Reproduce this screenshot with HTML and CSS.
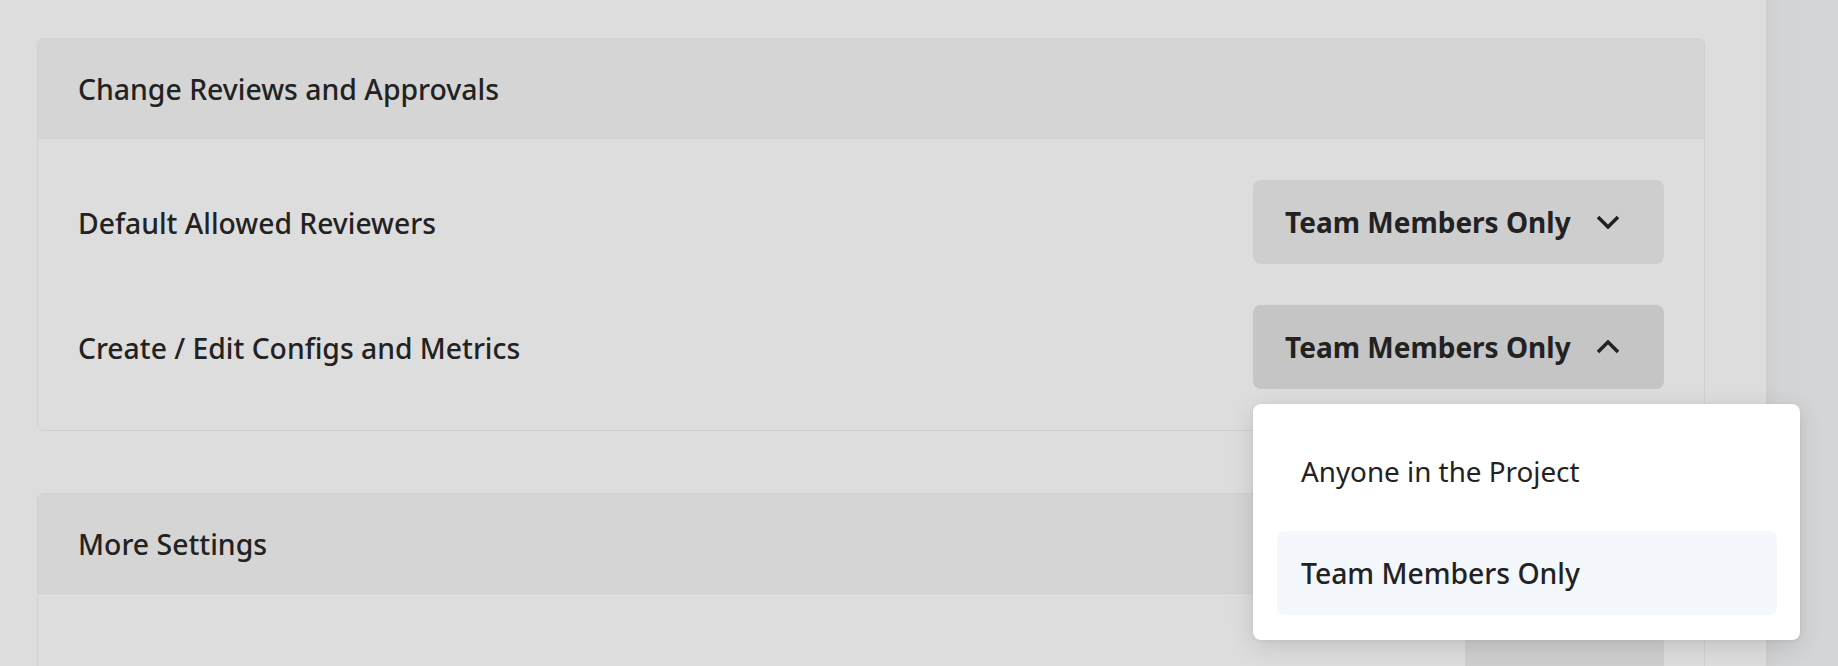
FILE: index.html
```html
<!DOCTYPE html>
<html lang="en">
<head>
<meta charset="utf-8">
<title>Settings</title>
<link rel="stylesheet" href="styles.css">
</head>
<body>
<div class="layout">
  <main class="main">
    <section class="card">
      <header class="card-header">Change Reviews and Approvals</header>
      <div class="card-body">
        <div class="row">
          <span class="row-label">Default Allowed Reviewers</span>
          <button class="select">
            <span>Team Members Only</span>
            <svg class="chev" width="24" height="14" viewBox="0 0 24 14"><polyline points="2,2 12,12 22,2"/></svg>
          </button>
        </div>
        <div class="row">
          <span class="row-label">Create / Edit Configs and Metrics</span>
          <div class="select-wrap">
            <button class="select open">
              <span>Team Members Only</span>
              <svg class="chev" width="24" height="14" viewBox="0 0 24 14"><polyline points="2,12 12,2 22,12"/></svg>
            </button>
            <ul class="menu">
              <li class="menu-item">Anyone in the Project</li>
              <li class="menu-item selected">Team Members Only</li>
            </ul>
          </div>
        </div>
      </div>
    </section>
    <section class="card">
      <header class="card-header">More Settings</header>
      <div class="card-body">
        <div class="row">
          <span class="row-label"></span>
          <button class="select small"></button>
        </div>
      </div>
    </section>
  </main>
  <aside class="side"></aside>
</div>
</body>
</html>
```
FILE: styles.css
```css
* { box-sizing: border-box; }
html, body {
  margin: 0;
  height: 666px;
  overflow: hidden;
  background: #dddddd;
  font-family: "Noto Sans", "Open Sans", sans-serif;
  color: #222222;
}
.layout {
  display: flex;
  height: 666px;
}
.main {
  width: 1766px;
  flex: none;
  padding: 38px 61px 0 37px;
  display: flex;
  flex-direction: column;
  gap: 62px;
}
.side {
  flex: 1;
  background: linear-gradient(to right, #cdcecf 0, #d3d4d6 14px, #d5d6d8 100%);
}
.card {
  border: 1px solid #d0d0d0;
  border-radius: 7px;
  background: #dddddd;
  flex: none;
}
.card-header {
  height: 100px;
  display: flex;
  align-items: center;
  padding-left: 40px;
  background: #d5d5d5;
  border-bottom: 1px solid #cfcfcf;
  border-radius: 7px 7px 0 0;
  font-size: 28.4px;
  font-weight: 500;
}
.card-body {
  padding: 41px 40px 41px 40px;
  display: flex;
  flex-direction: column;
  gap: 41px;
}
.row {
  display: flex;
  align-items: center;
  justify-content: space-between;
}
.row-label {
  font-size: 28.3px;
  font-weight: 500;
  padding-top: 2px;
}
.select-wrap {
  position: relative;
}
.select {
  width: 411px;
  height: 84px;
  border: none;
  border-radius: 8px;
  background: #cecece;
  display: flex;
  align-items: center;
  justify-content: space-between;
  padding: 0 44px 0 32px;
  font-family: inherit;
  font-size: 28px;
  font-weight: 700;
  color: #222222;
}
.select.open { background: #c5c5c5; }
.select.small {
  width: 199px;
  margin-left: auto;
}
.chev {
  fill: none;
  stroke: #222222;
  stroke-width: 3.5;
}
.menu {
  position: absolute;
  left: 0;
  top: 99px;
  width: 547px;
  margin: 0;
  padding: 25px 23px 25px 24px;
  list-style: none;
  background: #ffffff;
  border-radius: 8px;
  box-shadow: 0 6px 24px rgba(0, 0, 0, 0.12), 0 1px 4px rgba(0, 0, 0, 0.06);
  display: flex;
  flex-direction: column;
  gap: 18px;
  z-index: 5;
}
.menu-item {
  height: 84px;
  display: flex;
  align-items: center;
  padding-left: 24px;
  border-radius: 8px;
  font-size: 27.8px;
  font-weight: 400;
}
.menu-item.selected {
  background: #f4f7fc;
  font-size: 28.3px;
  font-weight: 500;
}
```
